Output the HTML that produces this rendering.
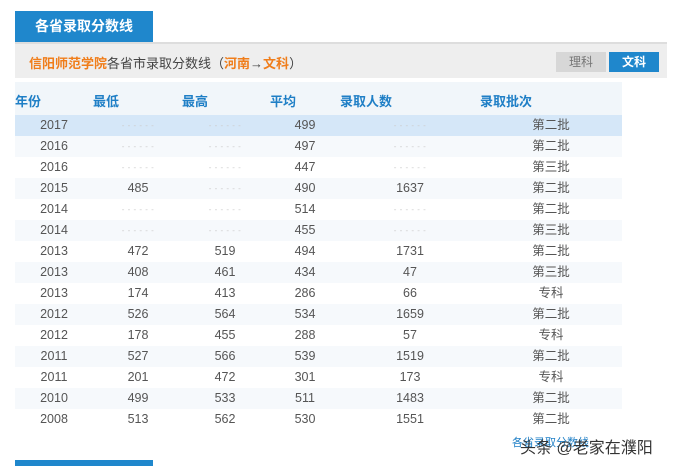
<!DOCTYPE html><html><head><meta charset="utf-8"><style>
body{margin:0;width:673px;height:466px;background:#fff;font-family:"Liberation Sans","Noto Sans CJK SC",sans-serif;position:relative;overflow:hidden}
.tab{position:absolute;left:15px;top:11px;width:138px;height:31px;background:#1f87cc;color:#fff;font-size:14px;font-weight:bold;line-height:31px;text-align:center}
.bar{position:absolute;left:15px;top:42px;width:652px;height:36px;background:#eeeeee;border-top:2px solid #ddd;box-sizing:border-box}
.bar .t{position:absolute;left:14px;top:9px;font-size:13px;color:#444}
.o{color:#f07d1a;font-weight:bold}
.b1{position:absolute;left:541px;top:8px;width:50px;height:20px;background:#d7d7d7;color:#777;font-size:12px;line-height:20px;text-align:center}
.b2{position:absolute;left:594px;top:8px;width:50px;height:20px;background:#1f87cc;color:#fff;font-size:12px;font-weight:bold;line-height:20px;text-align:center}
.hd{position:absolute;left:15px;top:82px;width:607px;height:33px;background:#f1f6fa}
.hd span{position:absolute;top:9px;font-size:13px;color:#1f7fc6;font-weight:bold}
.r{position:absolute;left:15px;width:607px;height:21px;font-size:12.5px;color:#555;line-height:21px}
.r span{position:absolute;text-align:center;width:80px}
.d{color:#ccc;font-size:8px;letter-spacing:0.5px}
.wm{position:absolute;left:520px;top:434px;font-size:16px;color:#333}
.lk{position:absolute;left:512px;top:434px;font-size:11px;color:#1f7fc6}
.bt{position:absolute;left:15px;top:460px;width:138px;height:6px;background:#1f87cc}
</style></head><body>
<div class="tab">各省录取分数线</div>
<div class="bar"><div class="t"><span class="o">信阳师范学院</span>各省市录取分数线（<span class="o">河南</span>→<span class="o">文科</span>）</div><div class="b1">理科</div><div class="b2">文科</div></div>
<div class="hd"><span style="left:0">年份</span><span style="left:78px">最低</span><span style="left:167px">最高</span><span style="left:255px">平均</span><span style="left:325px">录取人数</span><span style="left:465px">录取批次</span></div>
<div id="rows"></div>
<script>
var d=[["2017","","","499","","第二批"],["2016","","","497","","第二批"],["2016","","","447","","第三批"],["2015","485","","490","1637","第二批"],["2014","","","514","","第二批"],["2014","","","455","","第三批"],["2013","472","519","494","1731","第二批"],["2013","408","461","434","47","第三批"],["2013","174","413","286","66","专科"],["2012","526","564","534","1659","第二批"],["2012","178","455","288","57","专科"],["2011","527","566","539","1519","第二批"],["2011","201","472","301","173","专科"],["2010","499","533","511","1483","第二批"],["2008","513","562","530","1551","第二批"]];
var c=[-1,83,170,250,355,496],h="";
d.forEach(function(r,i){var bg=i==0?"#d5e7f8":(i%2==1?"#f6f9fc":"#fff");if(i==14)bg="#fff";
h+='<div class="r" style="top:'+(115+i*21)+'px;background:'+bg+'">';
r.forEach(function(v,j){h+='<span style="left:'+c[j]+'px"'+(v==""?' class="d">- - - - - -':'>'+v)+'</span>'});h+='</div>'});
document.getElementById('rows').innerHTML=h;
</script>
<div class="lk">各省录取分数线</div>
<div class="wm">头条 @老家在濮阳</div>
<div class="bt"></div>
</body></html>
